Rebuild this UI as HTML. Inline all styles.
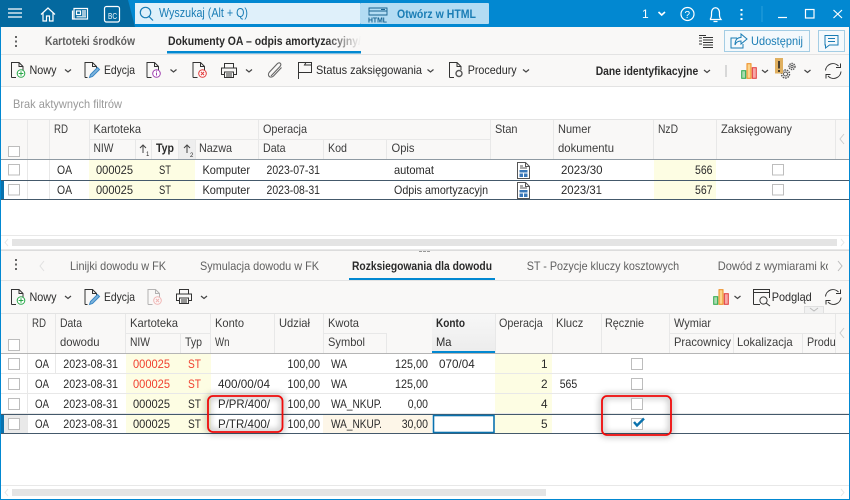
<!DOCTYPE html>
<html><head><meta charset="utf-8"><style>
html,body{margin:0;padding:0;background:#fff}
svg{display:block}
text{font-family:"Liberation Sans",sans-serif;font-size:11.8px;fill:#2a2a2a}
.h{fill:#3c3c3c}.b{font-weight:bold}.g{fill:#606060}.r{fill:#f04030}.bl{fill:#1a7db5}
.i{fill:none;stroke:#333;stroke-width:1}
.c{fill:#fff;stroke:#bdbdbd;stroke-width:1}
.ch{fill:none;stroke:#444;stroke-width:1.2}
.w{fill:none;stroke:#fff;stroke-width:1.2}
.s{stroke:#e8e8e8;stroke-width:1}
</style></head><body>
<svg xmlns="http://www.w3.org/2000/svg" width="850" height="500" viewBox="0 0 850 500">
<defs>
<linearGradient id="fade" x1="0" x2="1" y1="0" y2="0"><stop offset="0" stop-color="#f9f8f7" stop-opacity="0"/><stop offset="1" stop-color="#f9f8f7"/></linearGradient>
<linearGradient id="hg" x1="0" x2="0" y1="0" y2="1"><stop offset="0" stop-color="#f7f7f7"/><stop offset="1" stop-color="#ececec"/></linearGradient>
<filter id="sh" x="-30%" y="-30%" width="160%" height="160%"><feGaussianBlur stdDeviation="3.5"/></filter>
<clipPath id="c1"><rect x="386" y="160" width="102" height="40"/></clipPath>
<clipPath id="c2"><rect x="700" y="255" width="128" height="22"/></clipPath>
<clipPath id="c3"><rect x="168" y="30" width="193" height="22"/></clipPath>
<g id="chev"><path class="ch" d="M0.5 0.5 L3.5 3 L6.5 0.5"/></g>
<g id="doc"><path class="i" d="M1.5 15.5 V0.5 H9 L13 4.5 V8 M9 0.5 V4.5 H13 M1.5 15.5 H6"/></g>
<g id="printer"><path class="i" d="M3.5 5 V0.5 H12.5 V5 M3.5 11.5 H0.5 V5 H15.5 V11.5 H12.5 M3.5 9 H12.5 V14.5 H3.5 Z M5 11 H11 M5 13 H11"/></g>
<g id="bars"><rect x="0.7" y="7.7" width="4" height="7.6" fill="#a8dcb0" stroke="#2aa84a"/><rect x="6" y="0.7" width="4" height="14.6" fill="#fbd48c" stroke="#ee8a1c"/><rect x="11.3" y="4.7" width="4" height="10.6" fill="#f6a8a8" stroke="#e23a3a"/></g>
<g id="refresh"><path class="i" d="M0.5 7.5 A7.5 7.5 0 0 1 13.5 3 M15.5 0.5 V4.5 H11 M16 8.5 A7.5 7.5 0 0 1 3 13 M1 15.5 V11.5 H5.5"/></g>
<g id="new"><use href="#doc"/><circle cx="11" cy="11.5" r="3.8" fill="#fff" stroke="#2aa84a"/><path d="M8.7 11.5 H13.3 M11 9.2 V13.8" stroke="#2aa84a"/></g>
<g id="edit"><path class="i" d="M1.5 15.5 V0.5 H9 L13 4.5 V6 M9 0.5 V4.5 H13 M1.5 15.5 H4"/><path d="M6 15.5 L7 12.5 L14 5.5 L16 7.5 L9 14.5 Z" fill="#7fb4dc" stroke="#3a87c4"/></g>
<g id="del"><use href="#doc"/><circle cx="11" cy="11.5" r="3.8" fill="#fff" stroke="#e23a3a"/><path d="M9.4 9.900 L12.6 13.1 M12.6 9.900 L9.4 13.1" stroke="#e23a3a"/></g>
<g id="stan"><path d="M0.5 16.5 V0.5 H8.5 L12.5 4.5 V16.5 Z M8.5 0.5 V4.5 H12.5 M3 4 H6 M3 6 H10" fill="#fff" stroke="#555"/><rect x="2.5" y="8" width="8" height="7" fill="#3a78b8"/><path d="M2.5 11 H10.5 M6.5 11 V15" stroke="#fff"/></g>
</defs>

<rect width="850" height="500" fill="#fff"/>
<!-- title bar -->
<rect width="850" height="27" fill="#0288d1"/>
<path d="M0 0 H128 L135 27 H0 Z" fill="#04699f"/>
<path d="M8 9 H22 M8 13 H22 M8 17 H22" stroke="#fff" stroke-width="1.2"/>
<path class="w" d="M41 14.5 L48 8 L55 14.5 M43 13 V21 H46.5 V16 H49.5 V21 H53 V13"/>
<path class="w" d="M74 8.500 H87.500 V19 H74 Z M72.500 10.500 V19 H74 M76.500 11 H80.500 V14.500 H76.500 Z M82 11 H86 M82 13 H86 M82 15 H86 M76.500 16.800 H86"/>
<rect x="104.500" y="6.500" width="15" height="15.500" rx="2" class="w"/>
<text x="108" y="19" style="font-size:8.5px;fill:#fff" textLength="9" lengthAdjust="spacingAndGlyphs">BC</text>
<rect x="135" y="3" width="225" height="21" fill="#dff0fa"/>
<rect x="360" y="3" width="129" height="21" rx="1" fill="#b3dcf3"/>
<circle cx="145.500" cy="12.500" r="5.200" fill="none" stroke="#1a7db5" stroke-width="1.200"/>
<path d="M149 16.500 L153 20.500" stroke="#1a7db5" stroke-width="1.200"/>
<text x="159" y="17" class="bl" style="font-size:12.500px" textLength="89" lengthAdjust="spacingAndGlyphs">Wyszukaj (Alt + Q)</text>
<path d="M369 8 H387 V15 H369 Z M369 11 H387 M381 9.500 H385" fill="none" stroke="#17628f" stroke-width=".9"/>
<text x="368" y="22.500" class="b" style="font-size:7px;fill:#17628f" textLength="19" lengthAdjust="spacingAndGlyphs">HTML</text>
<text x="397" y="18" class="bl b" textLength="79" lengthAdjust="spacingAndGlyphs">Otwórz w HTML</text>
<text x="642" y="18" style="fill:#fff;font-size:12px">1</text>
<path d="M658.500 12 L661.700 15 L665 12" fill="none" stroke="#fff" stroke-width="1.600"/>
<circle cx="687.500" cy="14" r="6.500" class="w"/>
<text x="684.500" y="18" style="fill:#fff;font-size:10px">?</text>
<path class="w" d="M710 19.500 H721 C719 17 719.500 15 719.500 13 C719.500 6 711.500 6 711.500 13 C711.500 15 712 17 710 19.500 M713.500 21.500 H717.500"/>
<path d="M741.500 9 V11 M741.500 13.500 V15.500 M741.500 18 V20" stroke="#fff" stroke-width="2"/>
<path d="M762 6 V22" stroke="#2aa0dc"/>
<path d="M778 17.500 H787" stroke="#fff" stroke-width="1.200"/>
<rect x="805.500" y="9.500" width="8.500" height="8.500" class="w"/>
<path class="w" d="M833.500 10 L842 18 M842 10 L833.500 18"/>

<!-- tab bar -->
<rect x="1" y="27" width="848" height="27" fill="#f9f8f7"/>
<path d="M16 36 V38 M16 40.500 V42.500 M16 45 V47" stroke="#555" stroke-width="1.800"/>
<text x="45" y="45" class="g b" textLength="90" lengthAdjust="spacingAndGlyphs">Kartoteki środków</text>
<text x="168" y="45" class="b" clip-path="url(#c3)" textLength="193" lengthAdjust="spacingAndGlyphs">Dokumenty OA – odpis amortyzacyjny/</text>
<rect x="325" y="30" width="36" height="20" fill="url(#fade)"/>
<rect x="167" y="51" width="194" height="2.500" fill="#0288d1"/>
<path d="M699 35.500 H706 M699 38 H702 M699 41 H702 M699 44 H702 M703 40 H713 M703 42.500 H713 M703 45 H713 M703 47.500 H713 M703 37.500 H713" stroke="#333"/>
<rect x="724.500" y="30.500" width="85" height="21" fill="#f4f9fc" stroke="#a4cde4"/>
<path d="M737 38 H731 V48 H743 V44" fill="none" stroke="#1a7db5"/>
<path d="M735 45 C735 39 738 37.500 741 37.500 V34 L747 39 L741 44 V41 C738 41 736 42 735 45 Z" fill="none" stroke="#1a7db5"/>
<text x="751" y="45" class="bl" textLength="52" lengthAdjust="spacingAndGlyphs">Udostępnij</text>
<rect x="818.500" y="30.500" width="26" height="21" fill="#f4f9fc" stroke="#a4cde4"/>
<path d="M825 35.500 H838 V45 H829.500 L825.500 48 V45 H825 Z M828 38.500 H835 M828 41.500 H835" fill="none" stroke="#1a7db5"/>
<path d="M1 54.500 H849" stroke="#e3e3e3"/>

<!-- toolbar -->
<rect x="1" y="55" width="848" height="31" fill="#f9f8f7"/>
<use href="#new" x="10" y="62"/>
<text x="29.500" y="74" textLength="27" lengthAdjust="spacingAndGlyphs">Nowy</text>
<use href="#chev" x="64.500" y="69"/>
<use href="#edit" x="83.500" y="62"/>
<text x="104" y="74" textLength="31" lengthAdjust="spacingAndGlyphs">Edycja</text>
<use href="#doc" x="145.500" y="62"/>
<circle cx="156.500" cy="73.500" r="3.800" fill="#fff" stroke="#a040b0"/>
<path d="M156.500 72.500 V75.500 M156.500 70.800 V71.600" stroke="#a040b0"/>
<use href="#chev" x="170" y="69"/>
<use href="#del" x="191.500" y="62"/>
<use href="#printer" x="221" y="63"/>
<use href="#chev" x="245.500" y="69"/>
<path d="M271 76 L280 66.500 C282.500 63.500 279 61.500 277 64 L269.500 72 C266.500 75.500 270.500 79 273.500 76 L281.500 67.500" fill="none" stroke="#666" stroke-width="1.100"/>
<path class="i" d="M298.500 79 V62.500 H306 L304.500 65 H311.500 V72.500 H298.500 M306 62.500 H311.500 V72"/>
<text x="316" y="74" textLength="106" lengthAdjust="spacingAndGlyphs">Status zaksięgowania</text>
<use href="#chev" x="427" y="69"/>
<use href="#doc" x="448" y="62"/>
<circle cx="459" cy="73.500" r="3" fill="none" stroke="#555" stroke-width="1.400"/>
<text x="467.700" y="74" textLength="49" lengthAdjust="spacingAndGlyphs">Procedury</text>
<use href="#chev" x="522.500" y="69"/>
<text x="595.700" y="75" class="b" textLength="102.500" lengthAdjust="spacingAndGlyphs">Dane identyfikacyjne</text>
<use href="#chev" x="703.500" y="69.500"/>
<rect x="725" y="65" width="2" height="12" fill="#d8d8d8"/>
<use href="#bars" x="741" y="63"/>
<use href="#chev" x="761.500" y="69.500"/>
<circle cx="785.500" cy="74" r="4" fill="none" stroke="#555" stroke-width="1.500" stroke-dasharray="1.600 .9"/>
<circle cx="785.500" cy="74" r="2" fill="none" stroke="#555" stroke-width="1"/>
<circle cx="792" cy="66.500" r="3" fill="none" stroke="#555" stroke-width="1.400" stroke-dasharray="1.400 .8"/>
<circle cx="792" cy="66.500" r="1.200" fill="none" stroke="#555" stroke-width=".8"/>
<rect x="775" y="58" width="8" height="15.500" fill="#e0b060"/>
<path d="M779 61 V68.500 M779 70 V72" stroke="#222" stroke-width="1.600"/>
<use href="#chev" x="804" y="69.500"/>
<use href="#refresh" x="825" y="63"/>
<path d="M1 86.500 H849" stroke="#e3e3e3"/>

<!-- filter -->
<text x="13" y="108" style="fill:#999" textLength="109" lengthAdjust="spacingAndGlyphs">Brak aktywnych filtrów</text>
<path d="M1 119.500 H849" stroke="#e3e3e3"/>

<!-- upper header -->
<rect x="1" y="120" width="848" height="39" fill="#f9f8f7"/>
<rect x="179" y="140" width="16" height="19" fill="#eeeeee"/>
<path class="s" d="M27.500 120 V159 M49.500 120 V159 M89.500 120 V159 M135.500 140 V159 M151.500 140 V159 M178.500 140 V159 M195.500 140 V159 M258.500 120 V159 M323.500 140 V159 M386.500 140 V159 M490.500 120 V159 M553.500 120 V159 M653.500 120 V159 M716.500 120 V159 M835.500 120 V159 M89 139.500 H490"/>
<rect x="8.500" y="146.500" width="11" height="10" class="c"/>
<text x="54" y="133" class="h" textLength="14" lengthAdjust="spacingAndGlyphs">RD</text>
<text x="93.500" y="133" class="h" textLength="47.500" lengthAdjust="spacingAndGlyphs">Kartoteka</text>
<text x="263" y="133" class="h" textLength="44" lengthAdjust="spacingAndGlyphs">Operacja</text>
<text x="495" y="133" class="h" textLength="22.500" lengthAdjust="spacingAndGlyphs">Stan</text>
<text x="558" y="133" class="h" textLength="33" lengthAdjust="spacingAndGlyphs">Numer</text>
<text x="658" y="133" class="h" textLength="20" lengthAdjust="spacingAndGlyphs">NzD</text>
<text x="721" y="133" class="h" textLength="71" lengthAdjust="spacingAndGlyphs">Zaksięgowany</text>
<text x="93.500" y="152" class="h" textLength="20" lengthAdjust="spacingAndGlyphs">NIW</text>
<path d="M143 153 V145 M140 148 L143 145 L146 148" fill="none" stroke="#444"/>
<text x="146" y="156" style="font-size:6px">1</text>
<text x="156" y="152" class="b" textLength="18" lengthAdjust="spacingAndGlyphs">Typ</text>
<path d="M187 153 V145 M184 148 L187 145 L190 148" fill="none" stroke="#444"/>
<text x="190" y="157" style="font-size:6px">2</text>
<text x="199" y="152" class="h" textLength="33" lengthAdjust="spacingAndGlyphs">Nazwa</text>
<text x="263" y="152" class="h" textLength="22.500" lengthAdjust="spacingAndGlyphs">Data</text>
<text x="328" y="152" class="h" textLength="19" lengthAdjust="spacingAndGlyphs">Kod</text>
<text x="391.500" y="152" class="h" textLength="23" lengthAdjust="spacingAndGlyphs">Opis</text>
<text x="558" y="152" class="h" textLength="56" lengthAdjust="spacingAndGlyphs">dokumentu</text>
<path d="M844 134 L840 139 L844 144" fill="none" stroke="#ccc"/>
<path d="M1 159.500 H849" stroke="#8f9aa3"/>

<!-- upper rows -->
<rect x="89" y="160" width="106" height="40" fill="#fdfde3"/>
<rect x="654" y="160" width="62" height="40" fill="#fdfde3"/>
<path class="s" d="M27.500 160 V199 M49.500 160 V199"/>
<path d="M1 180.500 H849 M1 199.500 H849" stroke="#44596b"/>
<rect x="1" y="181" width="3" height="18" fill="#0a72ad"/>
<rect x="8.500" y="164.500" width="11" height="10.500" class="c"/>
<rect x="8.500" y="184.500" width="11" height="10.500" class="c"/>
<text x="57" y="174" textLength="15" lengthAdjust="spacingAndGlyphs">OA</text>
<text x="96" y="174" textLength="37" lengthAdjust="spacingAndGlyphs">000025</text>
<text x="159" y="174" textLength="12" lengthAdjust="spacingAndGlyphs">ST</text>
<text x="202.500" y="174" textLength="47.500" lengthAdjust="spacingAndGlyphs">Komputer</text>
<text x="266.500" y="174" textLength="53.500" lengthAdjust="spacingAndGlyphs">2023-07-31</text>
<text x="394" y="174" textLength="40" lengthAdjust="spacingAndGlyphs">automat</text>
<use href="#stan" x="517" y="162"/>
<text x="561" y="174" textLength="41.500" lengthAdjust="spacingAndGlyphs">2023/30</text>
<text x="695" y="174" textLength="17.500" lengthAdjust="spacingAndGlyphs">566</text>
<rect x="772.500" y="164.500" width="11" height="10.500" class="c"/>
<text x="57" y="194" textLength="15" lengthAdjust="spacingAndGlyphs">OA</text>
<text x="96" y="194" textLength="37" lengthAdjust="spacingAndGlyphs">000025</text>
<text x="159" y="194" textLength="12" lengthAdjust="spacingAndGlyphs">ST</text>
<text x="202.500" y="194" textLength="47.500" lengthAdjust="spacingAndGlyphs">Komputer</text>
<text x="266.500" y="194" textLength="53.500" lengthAdjust="spacingAndGlyphs">2023-08-31</text>
<text x="394" y="194" clip-path="url(#c1)" textLength="100" lengthAdjust="spacingAndGlyphs">Odpis amortyzacyjne</text>
<use href="#stan" x="517" y="182"/>
<text x="561" y="194" textLength="41" lengthAdjust="spacingAndGlyphs">2023/31</text>
<text x="695" y="194" textLength="17.500" lengthAdjust="spacingAndGlyphs">567</text>
<rect x="772.500" y="184.500" width="11" height="10.500" class="c"/>

<!-- upper scrollbar -->
<path d="M1 235.500 H849 M1 249.500 H849" stroke="#e8e8e8"/>
<rect x="12" y="239" width="825" height="7" fill="#e4e4e4"/>
<path d="M8 239 L5 242.500 L8 246 M841 239 L844 242.500 L841 246" fill="none" stroke="#e8e8e8"/>

<!-- splitter -->
<rect x="1" y="250" width="848" height="30" fill="#f9f8f7"/>
<path d="M1 250.500 H849" stroke="#dcdcdc"/>
<path d="M419 251.500 H431" stroke="#999" stroke-dasharray="3 1"/>
<!-- lower tabs -->
<path d="M16 259 V261 M16 263.500 V265.500 M16 268 V270" stroke="#555" stroke-width="1.800"/>
<path d="M44 261 L40 266 L44 271" fill="none" stroke="#e0e0e0"/>
<text x="70" y="270" class="g" textLength="96" lengthAdjust="spacingAndGlyphs">Linijki dowodu w FK</text>
<text x="200" y="270" class="g" textLength="119" lengthAdjust="spacingAndGlyphs">Symulacja dowodu w FK</text>
<text x="352" y="270" class="b" textLength="140" lengthAdjust="spacingAndGlyphs">Rozksiegowania dla dowodu</text>
<text x="526.700" y="270" class="g" textLength="152.500" lengthAdjust="spacingAndGlyphs">ST - Pozycje kluczy kosztowych</text>
<text x="717.700" y="270" class="g" clip-path="url(#c2)" textLength="114" lengthAdjust="spacingAndGlyphs">Dowód z wymiarami ko</text>
<path d="M838 261 L842 266 L838 271" fill="none" stroke="#bbb"/>
<rect x="349" y="278" width="146" height="2.500" fill="#0288d1"/>
<path d="M1 280.500 H849" stroke="#e3e3e3"/>

<!-- lower toolbar -->
<rect x="1" y="281" width="848" height="32" fill="#f9f8f7"/>
<use href="#new" x="10" y="289"/>
<text x="29.500" y="301" textLength="27" lengthAdjust="spacingAndGlyphs">Nowy</text>
<use href="#chev" x="64.500" y="295.500"/>
<use href="#edit" x="83.500" y="289"/>
<text x="104" y="301" textLength="31" lengthAdjust="spacingAndGlyphs">Edycja</text>
<g opacity=".35"><use href="#del" x="146.500" y="289"/></g>
<use href="#printer" x="176" y="289"/>
<use href="#chev" x="200.500" y="295.500"/>
<use href="#bars" x="713" y="289"/>
<use href="#chev" x="734" y="295.500"/>
<path class="i" d="M753.500 304.500 V289.500 H769.500 V298 M753.500 292.500 H769.500 M753.500 304.500 H760"/>
<circle cx="763.500" cy="300.500" r="3.600" class="i"/><path d="M766 303 L770 306" stroke="#333"/>
<text x="771.700" y="301" textLength="40" lengthAdjust="spacingAndGlyphs">Podgląd</text>
<use href="#refresh" x="825" y="289"/>
<rect x="804.500" y="306.500" width="19" height="7" fill="#f1f1f1" stroke="#e0e0e0"/>
<path d="M810 308 L814 311 L818 308" fill="none" stroke="#bbb"/>
<path d="M1 313.500 H849" stroke="#e3e3e3"/>

<!-- lower header -->
<rect x="1" y="314" width="848" height="39" fill="#f9f8f7"/>
<rect x="432" y="314" width="63" height="39" fill="url(#hg)"/>
<path class="s" d="M27.500 314 V353 M55.500 314 V353 M125.500 314 V353 M180.500 333 V353 M210.500 314 V353 M274.500 314 V353 M323.500 314 V353 M386.500 333 V353 M495.500 314 V353 M552.500 314 V353 M601.500 314 V353 M669.500 314 V353 M733.500 333 V353 M802.500 333 V353 M835.500 314 V353 M125 333.500 H210 M323 333.500 H386 M669 333.500 H836"/>
<rect x="432" y="351" width="63" height="2" fill="#0288d1"/>
<rect x="8.500" y="339.500" width="11" height="11" class="c"/>
<text x="32" y="327" class="h" textLength="14" lengthAdjust="spacingAndGlyphs">RD</text>
<text x="60" y="327" class="h" textLength="22" lengthAdjust="spacingAndGlyphs">Data</text>
<text x="60" y="346" class="h" textLength="39.500" lengthAdjust="spacingAndGlyphs">dowodu</text>
<text x="130" y="327" class="h" textLength="48" lengthAdjust="spacingAndGlyphs">Kartoteka</text>
<text x="130" y="346" class="h" textLength="20" lengthAdjust="spacingAndGlyphs">NIW</text>
<text x="185" y="346" class="h" textLength="17" lengthAdjust="spacingAndGlyphs">Typ</text>
<text x="215" y="327" class="h" textLength="29" lengthAdjust="spacingAndGlyphs">Konto</text>
<text x="215" y="346" class="h" textLength="14.500" lengthAdjust="spacingAndGlyphs">Wn</text>
<text x="279" y="327" class="h" textLength="31" lengthAdjust="spacingAndGlyphs">Udział</text>
<text x="328" y="327" class="h" textLength="31" lengthAdjust="spacingAndGlyphs">Kwota</text>
<text x="328" y="346" class="h" textLength="37" lengthAdjust="spacingAndGlyphs">Symbol</text>
<text x="436" y="327" class="b" textLength="29" lengthAdjust="spacingAndGlyphs">Konto</text>
<text x="436" y="346" textLength="15.500" lengthAdjust="spacingAndGlyphs">Ma</text>
<text x="499" y="327" class="h" textLength="43.700" lengthAdjust="spacingAndGlyphs">Operacja</text>
<text x="556" y="327" class="h" textLength="27.300" lengthAdjust="spacingAndGlyphs">Klucz</text>
<text x="605" y="327" class="h" textLength="39" lengthAdjust="spacingAndGlyphs">Ręcznie</text>
<text x="674" y="327" class="h" textLength="37" lengthAdjust="spacingAndGlyphs">Wymiar</text>
<text x="674" y="346" class="h" textLength="57" lengthAdjust="spacingAndGlyphs">Pracownicy</text>
<text x="737" y="346" class="h" textLength="55.700" lengthAdjust="spacingAndGlyphs">Lokalizacja</text>
<text x="807" y="346" class="h" textLength="28.700" lengthAdjust="spacingAndGlyphs">Produ</text>
<path d="M844 328 L840 333 L844 338" fill="none" stroke="#ccc"/>
<path d="M1 353.500 H849" stroke="#b5b5b5"/>

<!-- lower rows -->
<rect x="126" y="354" width="85" height="79" fill="#fdfde3"/>
<rect x="495" y="354" width="57" height="79" fill="#fdfde3"/>
<rect x="323" y="414" width="109" height="19" fill="#fdf6e8"/>
<rect x="4" y="415" width="23" height="18" fill="#e9e9e9"/>
<path class="s" d="M27.500 354 V433 M55.500 354 V373 M1 373.500 H849 M1 393.500 H849 M1 413.500 H849"/>
<path d="M1 414.500 H849 M1 433.500 H849" stroke="#44596b"/>
<rect x="1" y="415" width="3" height="18" fill="#0a72ad"/>
<rect x="433.500" y="415.500" width="60.500" height="17" fill="#fff" stroke="#0a72ad" stroke-width="1.600"/>

<rect x="8.500" y="358.500" width="11" height="11" class="c"/>
<rect x="8.500" y="378.500" width="11" height="11" class="c"/>
<rect x="8.500" y="398.500" width="11" height="11" class="c"/>
<rect x="8.500" y="418.500" width="11" height="11" class="c"/>

<text x="35" y="368" textLength="14" lengthAdjust="spacingAndGlyphs">OA</text>
<text x="63.300" y="368" textLength="54.700" lengthAdjust="spacingAndGlyphs">2023-08-31</text>
<text x="133" y="368" class="r" textLength="37" lengthAdjust="spacingAndGlyphs">000025</text>
<text x="188" y="368" class="r" textLength="13" lengthAdjust="spacingAndGlyphs">ST</text>
<text x="287.500" y="368" textLength="32.500" lengthAdjust="spacingAndGlyphs">100,00</text>
<text x="331" y="368" textLength="16" lengthAdjust="spacingAndGlyphs">WA</text>
<text x="395" y="368" textLength="33" lengthAdjust="spacingAndGlyphs">125,00</text>
<text x="439" y="368" textLength="35.700" lengthAdjust="spacingAndGlyphs">070/04</text>
<text x="541" y="368">1</text>

<text x="35" y="388" textLength="14" lengthAdjust="spacingAndGlyphs">OA</text>
<text x="63.300" y="388" textLength="54.700" lengthAdjust="spacingAndGlyphs">2023-08-31</text>
<text x="133" y="388" class="r" textLength="37" lengthAdjust="spacingAndGlyphs">000025</text>
<text x="188" y="388" class="r" textLength="13" lengthAdjust="spacingAndGlyphs">ST</text>
<text x="218" y="388" textLength="52" lengthAdjust="spacingAndGlyphs">400/00/04</text>
<text x="287.500" y="388" textLength="32.500" lengthAdjust="spacingAndGlyphs">100,00</text>
<text x="331" y="388" textLength="16" lengthAdjust="spacingAndGlyphs">WA</text>
<text x="395" y="388" textLength="33" lengthAdjust="spacingAndGlyphs">125,00</text>
<text x="541" y="388">2</text>
<text x="559.700" y="388" textLength="17.600" lengthAdjust="spacingAndGlyphs">565</text>

<text x="35" y="408" textLength="14" lengthAdjust="spacingAndGlyphs">OA</text>
<text x="63.300" y="408" textLength="54.700" lengthAdjust="spacingAndGlyphs">2023-08-31</text>
<text x="133" y="408" textLength="37" lengthAdjust="spacingAndGlyphs">000025</text>
<text x="188" y="408" textLength="13" lengthAdjust="spacingAndGlyphs">ST</text>
<text x="287.500" y="408" textLength="32.500" lengthAdjust="spacingAndGlyphs">100,00</text>
<text x="331" y="408" textLength="51" lengthAdjust="spacingAndGlyphs">WA_NKUP.</text>
<text x="407.700" y="408" textLength="20.300" lengthAdjust="spacingAndGlyphs">0,00</text>
<text x="541" y="408">4</text>

<text x="35" y="428" textLength="14" lengthAdjust="spacingAndGlyphs">OA</text>
<text x="63.300" y="428" textLength="54.700" lengthAdjust="spacingAndGlyphs">2023-08-31</text>
<text x="133" y="428" textLength="37" lengthAdjust="spacingAndGlyphs">000025</text>
<text x="188" y="428" textLength="13" lengthAdjust="spacingAndGlyphs">ST</text>
<text x="287.500" y="428" textLength="32.500" lengthAdjust="spacingAndGlyphs">100,00</text>
<text x="331" y="428" textLength="51" lengthAdjust="spacingAndGlyphs">WA_NKUP.</text>
<text x="401.700" y="428" textLength="26.300" lengthAdjust="spacingAndGlyphs">30,00</text>
<text x="541" y="428">5</text>

<rect x="631.500" y="358.500" width="11" height="11" class="c"/>
<rect x="631.500" y="378.500" width="11" height="11" class="c"/>

<!-- red highlight shadows -->
<rect x="208" y="396" width="74.500" height="36" rx="5" fill="none" stroke="#000" stroke-opacity=".4" stroke-width="3" filter="url(#sh)"/>
<rect x="602" y="396" width="69" height="39" rx="5" fill="none" stroke="#000" stroke-opacity=".4" stroke-width="3" filter="url(#sh)"/>

<text x="218" y="408" textLength="52" lengthAdjust="spacingAndGlyphs">P/PR/400/</text>
<text x="218" y="428" textLength="52" lengthAdjust="spacingAndGlyphs">P/TR/400/</text>
<rect x="631.500" y="398.500" width="11" height="11" class="c"/>
<rect x="631.500" y="418.500" width="11" height="11" class="c"/>
<path d="M634 422 L637 425.500 L644 418.500" fill="none" stroke="#0a72ad" stroke-width="2.400"/>

<rect x="208" y="396" width="74.500" height="36" rx="5" fill="none" stroke="#f00a0a" stroke-width="1.800"/>
<rect x="602" y="396" width="69" height="39" rx="5" fill="none" stroke="#f00a0a" stroke-width="1.800"/>

<!-- lower scrollbar -->
<path d="M1 485.500 H849" stroke="#e8e8e8"/>
<rect x="12" y="489" width="534" height="7" fill="#e4e4e4"/>
<path d="M8 489 L5 492.500 L8 496 M841 489 L844 492.500 L841 496" fill="none" stroke="#e8e8e8"/>

<!-- outer border -->
<rect x="0" y="27" width="1" height="473" fill="#0288d1"/>
<rect x="849" y="27" width="1" height="473" fill="#0288d1"/>
<rect x="0" y="499" width="850" height="1" fill="#0288d1"/>
</svg>
</body></html>
